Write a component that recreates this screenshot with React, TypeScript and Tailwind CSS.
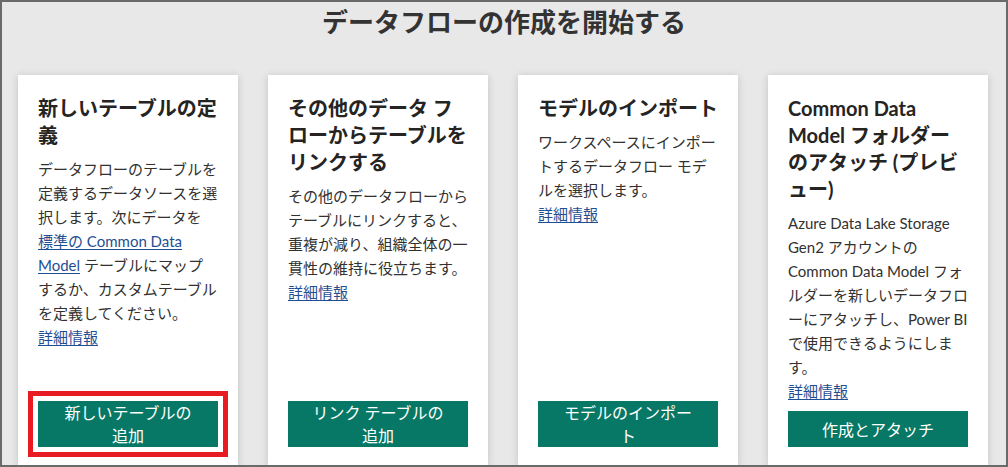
import React from 'react';

interface Option {
  title: React.ReactNode;
  body: React.ReactNode;
  button: string;
  highlighted?: boolean;
}

const linkCls = 'text-[#1f4f93] underline underline-offset-2';

const options: Option[] = [
  {
    title: '新しいテーブルの定義',
    body: (
      <>
        データフローのテーブルを定義するデータソースを選択します。次にデータを
        <br />
        <a className={linkCls}>標準の Common Data Model</a> テーブルにマップ
        <br />
        するか、カスタムテーブルを定義してください。
      </>
    ),
    button: '新しいテーブルの追加',
    highlighted: true,
  },
  {
    title: 'その他のデータ フローからテーブルをリンクする',
    body: 'その他のデータフローからテーブルにリンクすると、重複が減り、組織全体の一貫性の維持に役立ちます。',
    button: 'リンク テーブルの追加',
  },
  {
    title: 'モデルのインポート',
    body: 'ワークスペースにインポートするデータフロー モデルを選択します。',
    button: 'モデルのインポート',
  },
  {
    title: 'Common Data Model フォルダーのアタッチ (プレビュー)',
    body: 'Azure Data Lake Storage Gen2 アカウントの Common Data Model フォルダーを新しいデータフローにアタッチし、Power BI で使用できるようにします。',
    button: '作成とアタッチ',
  },
];

const OptionCard: React.FC<{ option: Option }> = ({ option }) => (
  <div className="w-[220px] h-[392px] shrink-0 bg-white shadow-[0_1px_8px_rgba(0,0,0,0.16)] px-5 pt-5 pb-5 flex flex-col">
    <h2 className="text-[20px] leading-[27px] font-bold text-[#252423]">{option.title}</h2>
    <p className="mt-2 text-[15px] leading-6 text-[#323130]">{option.body}</p>
    <a className={`${linkCls} text-[15px] leading-6 self-start`}>詳細情報</a>
    <button
      className={`mt-auto w-[180px] min-h-[36px] px-5 flex items-center justify-center bg-[#077865] text-white text-[16px] leading-[23px] text-center ${
        option.highlighted ? 'outline-[5px] outline-solid outline-[#e81b24] outline-offset-[5px]' : ''
      }`}
    >
      {option.button}
    </button>
  </div>
);

export default function App() {
  return (
    <div
      className="w-[1008px] h-[467px] border-2 border-[#6a6a6a] bg-[#e8e8e8] overflow-hidden flex flex-col"
      style={{ fontFamily: 'Lato, "Noto Sans CJK JP", sans-serif' }}
    >
      <h1 className="pt-[2px] text-center text-[26px] leading-[36px] font-bold text-[#333333]">
        データフローの作成を開始する
      </h1>
      <div className="mt-[35px] pl-4 flex gap-[30px]">
        {options.map((o, i) => (
          <OptionCard key={i} option={o} />
        ))}
      </div>
    </div>
  );
}
